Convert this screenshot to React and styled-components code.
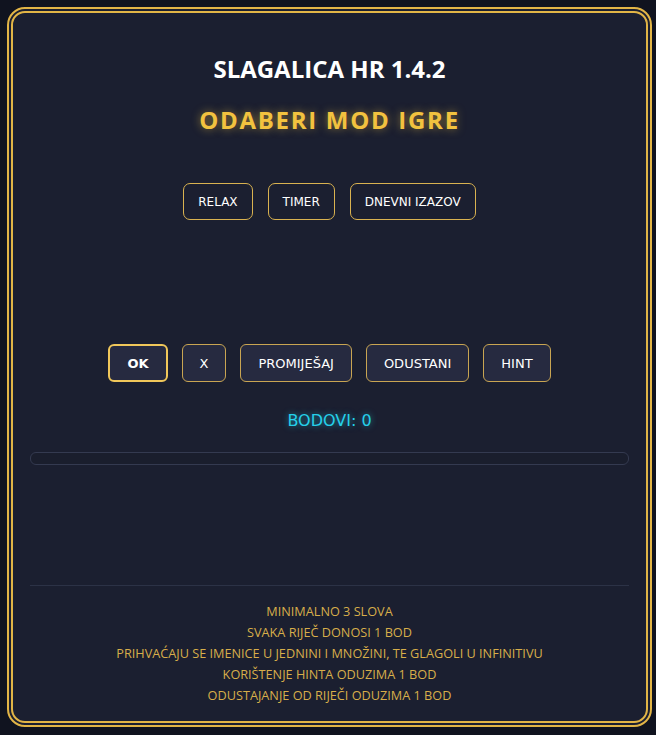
import React from 'react'
import styled, { createGlobalStyle } from 'styled-components'

const GlobalStyle = createGlobalStyle`
  html, body {
    margin: 0;
    padding: 0;
    background: #10131f;
  }
  * {
    box-sizing: border-box;
  }
`

const Page = styled.div`
  padding: 7px 0 0 7px;
`

const Panel = styled.div`
  width: 645px;
  height: 720px;
  border: 6px double #e2b546;
  border-radius: 18px;
  background: #1b1f30;
  padding: 0 17px;
  display: flex;
  flex-direction: column;
  align-items: center;
`

const Title = styled.h1`
  margin: 40px 0 0;
  font-family: 'Open Sans', sans-serif;
  font-size: 24px;
  font-weight: 700;
  color: #ffffff;
  line-height: 32px;
`

const Subtitle = styled.h2`
  margin: 19px 0 0;
  font-family: 'Open Sans', sans-serif;
  font-size: 24px;
  font-weight: 700;
  letter-spacing: 1.7px;
  color: #f2c23f;
  line-height: 32px;
  text-shadow: 0 0 8px rgba(242, 194, 63, 0.55);
`

const ButtonRow = styled.div`
  display: flex;
  justify-content: center;
  gap: ${({ $gap }) => $gap}px;
  margin-top: ${({ $top }) => $top}px;
`

const ModeButton = styled.button`
  height: 37px;
  padding: 0 14px;
  border: 1px solid #d9b250;
  border-radius: 7px;
  background: #1b1f30;
  color: #ffffff;
  font-family: 'DejaVu Sans', sans-serif;
  font-size: 12px;
  cursor: pointer;
`

const ActionButton = styled.button`
  height: 38px;
  padding: 0 17px;
  border: ${({ $primary }) => ($primary ? '2px solid #f0c75a' : '1px solid #c9a552')};
  border-radius: 6px;
  background: #262a40;
  color: #ffffff;
  font-family: 'DejaVu Sans', sans-serif;
  font-size: 13px;
  font-weight: ${({ $primary }) => ($primary ? 700 : 400)};
  cursor: pointer;
`

const Score = styled.div`
  margin-top: 28px;
  font-family: 'DejaVu Sans', sans-serif;
  font-size: 16px;
  color: #25d0ea;
  line-height: 22px;
  text-shadow: 0 0 6px rgba(37, 208, 234, 0.6);
`

const Progress = styled.div`
  align-self: stretch;
  margin-top: 20px;
  height: 13px;
  border: 1px solid #343a50;
  border-radius: 6px;
  background: #1a1e2d;
`

const Divider = styled.hr`
  align-self: stretch;
  margin: 120px 0 0;
  border: 0;
  border-top: 1px solid #2c3246;
`

const Rules = styled.ul`
  list-style: none;
  margin: 15px 0 0;
  padding: 0;
  text-align: center;
  font-family: 'Open Sans', sans-serif;
  font-size: 12.7px;
  line-height: 21px;
  color: #d7ae4a;
`

const rules = [
  'MINIMALNO 3 SLOVA',
  'SVAKA RIJEČ DONOSI 1 BOD',
  'PRIHVAĆAJU SE IMENICE U JEDNINI I MNOŽINI, TE GLAGOLI U INFINITIVU',
  'KORIŠTENJE HINTA ODUZIMA 1 BOD',
  'ODUSTAJANJE OD RIJEČI ODUZIMA 1 BOD'
]

export default function App() {
  return (
    <>
      <GlobalStyle />
      <Page>
        <Panel>
          <Title>SLAGALICA HR 1.4.2</Title>
          <Subtitle>ODABERI MOD IGRE</Subtitle>
          <ButtonRow $gap={15} $top={47}>
            <ModeButton>RELAX</ModeButton>
            <ModeButton>TIMER</ModeButton>
            <ModeButton>DNEVNI IZAZOV</ModeButton>
          </ButtonRow>
          <ButtonRow $gap={14} $top={124}>
            <ActionButton $primary>OK</ActionButton>
            <ActionButton>X</ActionButton>
            <ActionButton>PROMIJEŠAJ</ActionButton>
            <ActionButton>ODUSTANI</ActionButton>
            <ActionButton>HINT</ActionButton>
          </ButtonRow>
          <Score>BODOVI: 0</Score>
          <Progress />
          <Divider />
          <Rules>
            {rules.map((r) => (
              <li key={r}>{r}</li>
            ))}
          </Rules>
        </Panel>
      </Page>
    </>
  )
}
